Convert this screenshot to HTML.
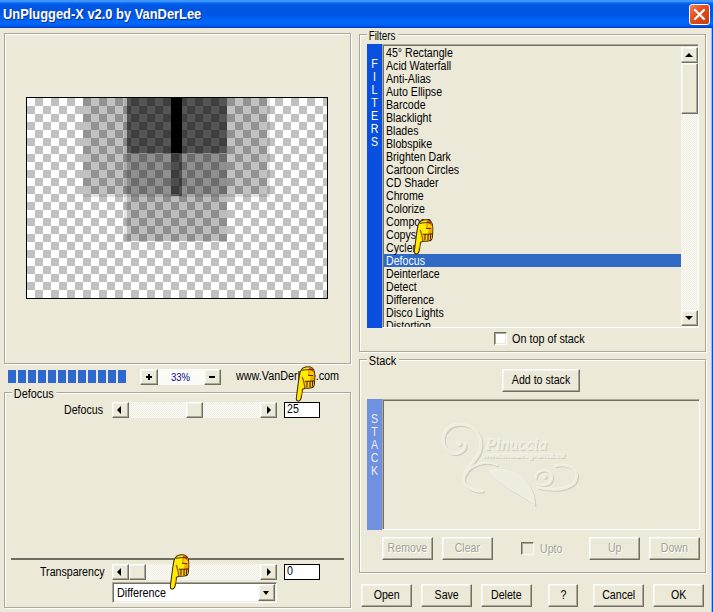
<!DOCTYPE html>
<html>
<head>
<meta charset="utf-8">
<title>UnPlugged-X v2.0 by VanDerLee</title>
<style>
*{box-sizing:border-box;margin:0;padding:0}
html,body{width:713px;height:612px;overflow:hidden;background:#ece9d8}
body{position:relative;font-family:"Liberation Sans",sans-serif;font-size:12px;color:#000;line-height:13px}
.abs{position:absolute}
#title{left:0;top:0;width:713px;height:28px;background:linear-gradient(to bottom,#3f96ff 0,#3d94fd 1.5px,#0768f2 3px,#0058e6 5px,#0055e0 8px,#0057e6 15px,#0060f5 19px,#0068fc 23px,#0061f2 25px,#0048d8 27px,#0038c0 28px)}
#title .t{left:3px;top:6px;font-family:"Liberation Sans",sans-serif;font-weight:bold;font-size:14px;line-height:17px;transform:scaleX(.92);transform-origin:0 0;color:#fff;text-shadow:1px 1px 0 #0a2f8c;white-space:nowrap}
#close{left:689px;top:4px;width:21px;height:21px;border:1px solid #fff;border-radius:3px;background:linear-gradient(135deg,#f08060 0,#e5501f 40%,#c93a0a 100%)}
#rb{left:711px;top:28px;width:2px;height:584px;background:linear-gradient(to right,rgba(8,72,220,.3) 0,rgba(8,72,220,.3) 1px,#0848dc 1px)}
.grp{position:absolute;border:1px solid #aca899;box-shadow:1px 1px 0 #fff,inset 1px 1px 0 #fff}
.lbl{position:absolute;background:#ece9d8;padding:0 3px 0 2px;white-space:nowrap;transform:scaleX(.885);transform-origin:0 0}
.txt{position:absolute;white-space:nowrap;transform:scaleX(.885);transform-origin:0 0}
.btn{position:absolute;background:#ece9d8;border:1px solid;border-color:#fff #716f64 #716f64 #fff;box-shadow:inset -1px -1px 0 #aca899,inset 1px 1px 0 #f5f4ea;text-align:center;white-space:nowrap}
.btn b{display:inline-block;font-weight:normal;transform:scaleX(.885)}
.btn.dis{color:#a5a192;text-shadow:1px 1px 0 #fff}
.sunk{position:absolute;border:1px solid;border-color:#aca899 #fff #fff #aca899;box-shadow:inset 1px 1px 0 #716f64,inset -1px -1px 0 #ece9d8}
.track{position:absolute;background:conic-gradient(#fdfcf8 25%,#efede0 0 50%,#fdfcf8 0 75%,#efede0 0) 0 0/2px 2px}
.edit{position:absolute;border:1px solid #000;background:#fff}
.edit b{position:absolute;left:2px;top:0.4px;font-weight:normal;transform:scaleX(.885);transform-origin:0 0}
.chk{position:absolute;width:13px;height:13px;background:#fff;border:1px solid;border-color:#716f64 #fff #fff #716f64;box-shadow:inset 1px 1px 0 #aca899,inset -1px -1px 0 #ece9d8}
.tri{position:absolute;width:0;height:0;border-style:solid}
</style>
</head>
<body>
<div id="title" class="abs"><div class="abs t">UnPlugged-X v2.0 by VanDerLee</div>
<div id="close" class="abs"><svg width="19" height="19" viewBox="0 0 19 19" style="position:absolute;left:0;top:0"><path d="M5 5 L14 14 M14 5 L5 14" stroke="#fff" stroke-width="2.2" stroke-linecap="round" fill="none"/></svg></div>
</div>
<div id="rb" class="abs"></div>

<!-- preview panel -->
<div class="grp" style="left:4px;top:33px;width:347px;height:331px"></div>
<div id="preview" class="abs" style="left:26px;top:97px;width:302px;height:202px;border:1px solid #000;overflow:hidden;background:conic-gradient(#c0c0c0 25%,#fff 0 50%,#c0c0c0 0 75%,#fff 0) 0 0/16px 16px">
  <div class="abs" style="left:56px;top:0;width:184px;height:96px;background:rgba(0,0,0,.24)"></div>
  <div class="abs" style="left:240px;top:0;width:3px;height:99px;background:rgba(0,0,0,.11)"></div>
  <div class="abs" style="left:56px;top:96px;width:184px;height:3px;background:rgba(0,0,0,.11)"></div>
  <div class="abs" style="left:97px;top:0;width:3px;height:143px;background:rgba(0,0,0,.1)"></div>
  <div class="abs" style="left:100px;top:0;width:100px;height:55px;background:rgba(0,0,0,.57)"></div>
  <div class="abs" style="left:100px;top:55px;width:100px;height:88px;background:rgba(0,0,0,.26)"></div>
  <div class="abs" style="left:144px;top:0;width:11px;height:55px;background:#000"></div>
  <div class="abs" style="left:144px;top:55px;width:11px;height:43px;background:rgba(0,0,0,.45)"></div>
</div>

<!-- zoom row -->
<div id="prog" class="abs" style="left:8px;top:370px;width:118px;height:13px;background:repeating-linear-gradient(to right,#2f68cf 0,#2f68cf 8px,transparent 8px,transparent 10px)"></div>
<div class="btn" style="left:140px;top:369px;width:18px;height:16px"><i class="abs" style="left:5px;top:6px;width:6px;height:2px;background:#000"></i><i class="abs" style="left:7px;top:4px;width:2px;height:6px;background:#000"></i></div>
<div class="abs" style="left:158px;top:369px;width:46px;height:16px;background:#fbfbf7"></div>
<div class="txt" style="left:171px;top:370.6px;color:#0a0a8c;font-size:11.5px;transform:scaleX(.83)">33%</div>
<div class="btn" style="left:204px;top:369px;width:17px;height:16px"><i class="abs" style="left:4px;top:6px;width:6px;height:2px;background:#000"></i></div>
<div class="txt" style="left:236px;top:369.8px;transform:scaleX(.9)">www.VanDerLee.com</div>

<!-- defocus group -->
<div class="grp" style="left:4px;top:392px;width:347px;height:216px"></div>
<div class="lbl" style="left:12px;top:387.6px;transform:scaleX(.904)">Defocus</div>
<div class="txt" style="left:64px;top:404px">Defocus</div>
<div class="track" style="left:112px;top:402px;width:165px;height:16px"></div>
<div class="btn" style="left:112px;top:402px;width:17px;height:16px"><i class="tri" style="left:4px;top:3px;border-width:4px 4.5px 4px 0;border-color:transparent #000 transparent transparent"></i></div>
<div class="btn" style="left:186px;top:402px;width:17px;height:16px"></div>
<div class="btn" style="left:260px;top:402px;width:17px;height:16px"><i class="tri" style="left:5.5px;top:3px;border-width:4px 0 4px 4.5px;border-color:transparent transparent transparent #000"></i></div>
<div class="edit" style="left:284px;top:402px;width:36px;height:16px"><b>25</b></div>

<div class="abs" style="left:11px;top:558px;width:333px;height:2px;background:#6f6d62"></div>
<div class="txt" style="left:40px;top:566px">Transparency</div>
<div class="track" style="left:112px;top:564px;width:165px;height:16px"></div>
<div class="btn" style="left:112px;top:564px;width:17px;height:16px"><i class="tri" style="left:4px;top:3px;border-width:4px 4.5px 4px 0;border-color:transparent #000 transparent transparent"></i></div>
<div class="btn" style="left:129px;top:564px;width:17px;height:16px"></div>
<div class="btn" style="left:260px;top:564px;width:17px;height:16px"><i class="tri" style="left:5.5px;top:3px;border-width:4px 0 4px 4.5px;border-color:transparent transparent transparent #000"></i></div>
<div class="edit" style="left:284px;top:564px;width:36px;height:16px"><b>0</b></div>
<div class="sunk" style="left:112px;top:582px;width:165px;height:21px;background:#fff"><div class="txt" style="left:3.5px;top:3.6px;transform:scaleX(.9)">Difference</div>
<div class="btn" style="right:1px;top:1px;width:17px;height:17px"><i class="tri" style="left:4px;top:6px;border-width:4px 3.5px 0 3.5px;border-color:#000 transparent transparent transparent"></i></div></div>

<!-- filters group -->
<div class="grp" style="left:359px;top:34px;width:347px;height:318px"></div>
<div class="lbl" style="left:367px;top:29.5px;transform:scaleX(.82)">Filters</div>
<div class="abs" style="left:367px;top:44px;width:15px;height:284px;background:#0a50e0;color:#fff;text-align:center;padding-top:14px"><div style="transform:scaleX(.885)">F<br>I<br>L<br>T<br>E<br>R<br>S</div></div>
<div id="list" class="sunk" style="left:382px;top:44px;width:317px;height:284px;overflow:hidden">
<div class="abs" style="left:1px;top:209px;width:297px;height:13px;background:#316ac5"></div>
<div class="txt" style="left:3.2px;top:2px;line-height:13px"><div>45° Rectangle</div><div>Acid Waterfall</div><div>Anti-Alias</div><div>Auto Ellipse</div><div>Barcode</div><div>Blacklight</div><div>Blades</div><div>Blobspike</div><div>Brighten Dark</div><div>Cartoon Circles</div><div>CD Shader</div><div>Chrome</div><div>Colorize</div><div>Compose</div><div>Copystar</div><div>Cycler</div><div style="color:#fff">Defocus</div><div>Deinterlace</div><div>Detect</div><div>Difference</div><div>Disco Lights</div><div>Distortion</div></div>
<div class="track" style="left:298px;top:2px;width:17px;height:280px"></div>
<div class="btn" style="left:298px;top:2px;width:17px;height:16px"><i class="tri" style="left:3px;top:5px;border-width:0 4px 4px 4px;border-color:transparent transparent #000 transparent"></i></div>
<div class="btn" style="left:298px;top:18px;width:17px;height:51px"></div>
<div class="btn" style="left:298px;top:265px;width:17px;height:16px"><i class="tri" style="left:3px;top:5px;border-width:4px 4px 0 4px;border-color:#000 transparent transparent transparent"></i></div>
</div>
<div class="chk" style="left:494px;top:332px"></div>
<div class="txt" style="left:512px;top:333.3px;transform:scaleX(.9)">On top of stack</div>

<!-- stack group -->
<div class="grp" style="left:359px;top:359px;width:347px;height:214px"></div>
<div class="lbl" style="left:367px;top:354.6px;transform:scaleX(.913)">Stack</div>
<div class="btn" style="left:502px;top:369px;width:78px;height:23px;line-height:21px"><b>Add to stack</b></div>
<div class="abs" style="left:367px;top:399px;width:15px;height:131px;background:#7090e0;color:rgba(255,255,255,.88);text-align:center;padding-top:14px"><div style="transform:scaleX(.885)">S<br>T<br>A<br>C<br>K</div></div>
<div id="stack" class="sunk" style="left:382px;top:399px;width:318px;height:131px"></div>
<svg id="wm" class="abs" style="left:430px;top:410px" width="160" height="110" viewBox="0 0 713 490">
<g fill="#cfccbb" stroke="#cfccbb" transform="translate(5,5)"><path d="M100 195 C40 170 45 70 130 65 C200 62 240 120 225 180 C215 220 160 260 150 305 C148 340 190 365 235 362" fill="none" stroke-width="11" stroke-linecap="round"/>
<path d="M100 195 C130 202 165 182 158 148" fill="none" stroke-width="8" stroke-linecap="round"/>
<circle cx="130" cy="150" r="11" stroke="none"/>
<path d="M300 247 C250 225 185 240 160 288" fill="none" stroke-width="6" stroke-linecap="round"/>
<path d="M265 275 C320 250 400 280 440 330 C465 370 470 400 468 428 C440 400 405 385 370 362 C330 335 290 310 265 275 Z" stroke="none"/>
<path d="M472 305 C468 265 540 255 545 300 C545 335 500 342 478 332" fill="none" stroke-width="7" stroke-linecap="round"/>
<circle cx="510" cy="296" r="10" stroke="none"/>
<path d="M560 250 C620 235 668 268 652 312 C636 352 560 366 482 346" fill="none" stroke-width="9" stroke-linecap="round"/>
<text x="248" y="176" font-family="'Liberation Serif',serif" font-style="italic" font-size="72" stroke="none" textLength="275" lengthAdjust="spacingAndGlyphs">Pinuccia</text>
<text x="236" y="213" font-family="'Liberation Sans',sans-serif" font-weight="bold" font-style="italic" font-size="32" stroke="none" textLength="365" lengthAdjust="spacingAndGlyphs">www.maidiragrafica.eu</text></g>
<g fill="#f5f3e9" stroke="#f5f3e9" transform="translate(-3,-3)"><path d="M100 195 C40 170 45 70 130 65 C200 62 240 120 225 180 C215 220 160 260 150 305 C148 340 190 365 235 362" fill="none" stroke-width="11" stroke-linecap="round"/>
<path d="M100 195 C130 202 165 182 158 148" fill="none" stroke-width="8" stroke-linecap="round"/>
<circle cx="130" cy="150" r="11" stroke="none"/>
<path d="M300 247 C250 225 185 240 160 288" fill="none" stroke-width="6" stroke-linecap="round"/>
<path d="M265 275 C320 250 400 280 440 330 C465 370 470 400 468 428 C440 400 405 385 370 362 C330 335 290 310 265 275 Z" stroke="none"/>
<path d="M472 305 C468 265 540 255 545 300 C545 335 500 342 478 332" fill="none" stroke-width="7" stroke-linecap="round"/>
<circle cx="510" cy="296" r="10" stroke="none"/>
<path d="M560 250 C620 235 668 268 652 312 C636 352 560 366 482 346" fill="none" stroke-width="9" stroke-linecap="round"/>
<text x="248" y="176" font-family="'Liberation Serif',serif" font-style="italic" font-size="72" stroke="none" textLength="275" lengthAdjust="spacingAndGlyphs">Pinuccia</text>
<text x="236" y="213" font-family="'Liberation Sans',sans-serif" font-weight="bold" font-style="italic" font-size="32" stroke="none" textLength="365" lengthAdjust="spacingAndGlyphs">www.maidiragrafica.eu</text></g>
<g fill="#efede0" stroke="#efede0"><path d="M100 195 C40 170 45 70 130 65 C200 62 240 120 225 180 C215 220 160 260 150 305 C148 340 190 365 235 362" fill="none" stroke-width="11" stroke-linecap="round"/>
<path d="M100 195 C130 202 165 182 158 148" fill="none" stroke-width="8" stroke-linecap="round"/>
<circle cx="130" cy="150" r="11" stroke="none"/>
<path d="M300 247 C250 225 185 240 160 288" fill="none" stroke-width="6" stroke-linecap="round"/>
<path d="M265 275 C320 250 400 280 440 330 C465 370 470 400 468 428 C440 400 405 385 370 362 C330 335 290 310 265 275 Z" stroke="none"/>
<path d="M472 305 C468 265 540 255 545 300 C545 335 500 342 478 332" fill="none" stroke-width="7" stroke-linecap="round"/>
<circle cx="510" cy="296" r="10" stroke="none"/>
<path d="M560 250 C620 235 668 268 652 312 C636 352 560 366 482 346" fill="none" stroke-width="9" stroke-linecap="round"/>
<text x="248" y="176" font-family="'Liberation Serif',serif" font-style="italic" font-size="72" stroke="none" textLength="275" lengthAdjust="spacingAndGlyphs">Pinuccia</text>
<text x="236" y="213" font-family="'Liberation Sans',sans-serif" font-weight="bold" font-style="italic" font-size="32" stroke="none" textLength="365" lengthAdjust="spacingAndGlyphs">www.maidiragrafica.eu</text></g>
</svg>
<div class="btn dis" style="left:382px;top:537px;width:51px;height:23px;line-height:21px"><b>Remove</b></div>
<div class="btn dis" style="left:442px;top:537px;width:51px;height:23px;line-height:21px"><b>Clear</b></div>
<div class="chk" style="left:521px;top:542px;background:#ece9d8"></div>
<div class="txt" style="left:539.5px;top:543.1px;color:#a5a192;text-shadow:1px 1px 0 #fff">Upto</div>
<div class="btn dis" style="left:589px;top:537px;width:51px;height:23px;line-height:21px"><b>Up</b></div>
<div class="btn dis" style="left:649px;top:537px;width:51px;height:23px;line-height:21px"><b>Down</b></div>

<svg width="0" height="0" style="position:absolute"><defs>
<symbol id="hand" viewBox="0 0 20 36" preserveAspectRatio="none">
<path d="M5.7 4.4 C6.4 2.6 7.8 1.3 10 0.9 C12.4 0.5 14.8 0.8 16.2 1.9 C17.4 2.9 18 3.8 18.3 5 C18.7 6.8 18.9 8.6 18.8 10.7 C18.8 13 18.7 15.5 18.5 17.8 C18.3 19.4 17.9 20.5 17.3 21.2 C15 22.2 12.5 22.5 9.7 22.2 L7.2 23.3 L6 31.3 C5.4 33.4 4.6 34.9 3.5 35.1 C2.2 35.1 1.3 34 1.2 32.7 L2.2 24.5 L3.5 14.2 L4.8 6.2 Z" fill="#ffec00" stroke="#3c2800" stroke-width="1" stroke-linejoin="round"/>
<path d="M12.6 3.8 L17.9 4.6 C18.4 6.5 18.5 8.5 18.4 10.7 C18.4 13 18.3 15.5 18.1 17.4 C17.9 18.8 17.6 19.7 17 20.3 C15 21.2 12.5 21.5 10 21.3 L9.8 15.4 L14 15 L15 9.8 L12.4 9 Z" fill="#f7a600"/>
<path d="M13.8 4 L17.6 4.8 L17.9 8.2 L16.6 9.4 L13.4 9.2 L14.8 6.4 Z" fill="#ffd400"/>
<path d="M13.6 1.5 L15.4 1.4 C16.8 2.2 17.6 3.4 18 4.6 L17.9 7 L15.2 4.2 L12.6 3.6 Z" fill="#e8581a"/>
<path d="M10.2 15.6 L11 15.5 L11 20.8 L10.2 21.2 Z M12.1 15.5 L13.6 15.4 L13.4 21 L12.1 21.2 Z M15 15.3 L16 15.2 L15.9 20.4 L15 20.8 Z" fill="#ffd21a"/>
<path d="M6.8 4.3 C10 3.6 13 3.4 17 3.9 M12.8 9.4 L16.8 9.5 M9.7 15.3 C12.5 15.3 15.4 15.2 18.2 14.9 M11.5 15.5 L11.3 21 M14.4 15.4 L14.3 21 M16.8 15.2 L16.6 20.4" fill="none" stroke="#3c2000" stroke-width=".9" stroke-linecap="round"/>
<path d="M7 11.4 C7.7 13.6 8.4 15.6 8.7 17.6 C9 19.2 9.2 20.4 9.3 21.6" fill="none" stroke="#a45a00" stroke-width="1.3" stroke-linecap="round"/>
<path d="M6.4 23.6 C6.1 26.5 5.7 29 5.2 31.2" fill="none" stroke="#f0b000" stroke-width=".9" stroke-linecap="round"/>
</symbol></defs></svg>
<svg class="abs" style="left:412.6px;top:219.3px" width="21" height="36"><use href="#hand"/></svg>
<svg class="abs" style="left:295.2px;top:365.5px" width="21" height="36"><use href="#hand"/></svg>
<svg class="abs" style="left:168.6px;top:553.8px" width="21" height="36"><use href="#hand"/></svg>
<!-- bottom buttons -->
<div class="btn" style="left:361px;top:584px;width:51px;height:23px;line-height:21px"><b>Open</b></div>
<div class="btn" style="left:421px;top:584px;width:51px;height:23px;line-height:21px"><b>Save</b></div>
<div class="btn" style="left:481px;top:584px;width:51px;height:23px;line-height:21px"><b>Delete</b></div>
<div class="btn" style="left:548px;top:584px;width:30px;height:23px;line-height:21px"><b>?</b></div>
<div class="btn" style="left:593px;top:584px;width:51px;height:23px;line-height:21px"><b>Cancel</b></div>
<div class="btn" style="left:653px;top:584px;width:51px;height:23px;line-height:21px"><b>OK</b></div>
</body>
</html>
